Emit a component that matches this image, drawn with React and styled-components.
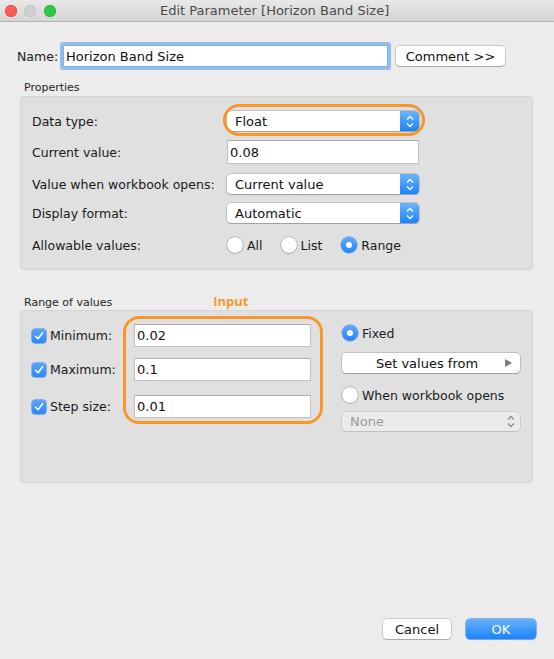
import React from 'react';
import styled, { createGlobalStyle } from 'styled-components';

const Global = createGlobalStyle`
  html, body { margin: 0; padding: 0; background: #ececec; }
  body {
    font-family: "DejaVu Sans", "Open Sans", sans-serif;
    font-size: 12.5px;
    color: #1a1a1a;
  }
  * { box-sizing: border-box; }
`;

const Window = styled.div`
  width: 554px;
  height: 659px;
  display: flex;
  flex-direction: column;
  background: #ececec;
  overflow: hidden;
`;

const TitleBar = styled.div`
  height: 22px;
  flex: none;
  display: flex;
  align-items: center;
  background: linear-gradient(#e8e8e8, #d5d5d5);
  border-bottom: 1px solid #b4b4b4;
`;

const Lights = styled.div`
  display: flex;
  gap: 7.5px;
  padding-left: 4.5px;
  width: 160px;
`;

const Light = styled.span`
  width: 12px;
  height: 12px;
  border-radius: 50%;
  background: ${p => p.$c};
  box-shadow: inset 0 0 0 0.5px ${p => p.$b};
`;

const Title = styled.div`
  font-size: 13px;
  color: #4a4a4a;
  white-space: nowrap;
`;

const NameRow = styled.div`
  display: flex;
  align-items: center;
  height: 26px;
  margin-top: 21px;
  padding-left: 17px;
`;

const NameLabel = styled.span`
  width: 46px;
`;

const TextField = styled.div`
  width: ${p => p.$w}px;
  height: ${p => p.$h}px;
  background: #fff;
  border: 1px solid #c0c0c0;
  border-top-color: #adadad;
  display: flex;
  align-items: center;
  padding-left: 2px;
  font-size: 13px;
  color: #111;
  ${p => p.$focus && `
    box-shadow: 0 0 0 3px #92bdf0;
    border-color: #86b0e6;
    border-radius: 1px;
  `}
`;

const PushButton = styled.div`
  width: ${p => p.$w}px;
  height: 20px;
  border-radius: 4px;
  display: flex;
  align-items: center;
  justify-content: center;
  font-size: 13px;
  color: ${p => (p.$primary ? '#fff' : '#111')};
  background: ${p => (p.$primary ? 'linear-gradient(#69b1fa, #1b82fb)' : '#fff')};
  box-shadow: ${p =>
    p.$primary
      ? '0 0 0 0.5px #2d7fe6, 0 1px 1px rgba(0,0,0,0.15)'
      : '0 0 0 0.5px rgba(0,0,0,0.28), 0 1px 1px rgba(0,0,0,0.18)'};
  margin-left: ${p => p.$ml || 0}px;
`;

const SectionHeader = styled.div`
  display: flex;
  align-items: center;
  height: 14px;
  padding-left: 24px;
  margin-top: ${p => p.$mt}px;
  margin-bottom: ${p => p.$mb}px;
`;

const SmallLabel = styled.span`
  font-size: 11px;
  color: #1f1f1f;
`;

const Annotation = styled.span`
  font-family: "Open Sans", "DejaVu Sans", sans-serif;
  font-weight: 700;
  font-size: 13px;
  color: #f39a2c;
  margin-left: ${p => p.$ml}px;
  margin-top: -3px;
`;

const Panel = styled.div`
  margin: 0 21px 0 20px;
  height: ${p => p.$h}px;
  background: #e0e0e0;
  border: 1px solid #d3d3d3;
  border-radius: 4px;
  padding: ${p => p.$pad};
`;

const FormRow = styled.div`
  display: flex;
  align-items: center;
  height: ${p => p.$h}px;
  margin-top: ${p => p.$mt || 0}px;
`;

const FormLabel = styled.span`
  width: 195px;
  flex: none;
`;

const SelectBox = styled.div`
  position: relative;
  width: ${p => p.$w}px;
  height: ${p => p.$h || 20}px;
  display: flex;
  align-items: center;
  background: ${p => (p.$disabled ? '#ebebeb' : '#fff')};
  border-radius: 4px;
  box-shadow: ${p =>
    p.$disabled
      ? '0 0 0 0.5px rgba(0,0,0,0.15), 0 1px 1px rgba(0,0,0,0.08)'
      : '0 0 0 0.5px rgba(0,0,0,0.28), 0 1px 1px rgba(0,0,0,0.18)'};
  padding-left: 8px;
  color: ${p => (p.$disabled ? '#9a9a9a' : '#111')};
  font-size: 13px;
  ${p => p.$ring && `
    &::after {
      content: '';
      position: absolute;
      top: -7px; bottom: -5px; left: -4px; right: -6px;
      border: 3px solid #f7962b;
      border-radius: 16px;
      pointer-events: none;
    }
  `}
`;

const SelectArrow = styled.span`
  margin-left: auto;
  width: 19px;
  height: 100%;
  display: flex;
  align-items: center;
  justify-content: center;
  border-radius: 0 4px 4px 0;
  background: ${p => (p.$disabled ? 'transparent' : 'linear-gradient(#6cb4fb, #1c83fb)')};
`;

const RadioGroup = styled.div`
  display: flex;
  align-items: center;
`;

const RadioItem = styled.span`
  display: flex;
  align-items: center;
  gap: 4px;
  margin-right: ${p => p.$mr || 0}px;
`;

const RadioCircle = styled.span`
  width: 16px;
  height: 16px;
  border-radius: 50%;
  flex: none;
  display: flex;
  align-items: center;
  justify-content: center;
  background: ${p => (p.$on ? 'linear-gradient(#5eaafa, #2586fb)' : '#fff')};
  box-shadow: ${p =>
    p.$on ? '0 0 0 0.5px #2a7fe8' : '0 0 0 0.5px rgba(0,0,0,0.35), 0 1px 1px rgba(0,0,0,0.12)'};
  &::after {
    content: '';
    display: ${p => (p.$on ? 'block' : 'none')};
    width: 6px;
    height: 6px;
    border-radius: 50%;
    background: #fff;
  }
`;

const RangeBody = styled.div`
  display: flex;
`;

const CheckCol = styled.div`
  width: 91px;
  padding-top: 8px;
  display: flex;
  flex-direction: column;
`;

const CheckRow = styled.div`
  display: flex;
  align-items: center;
  gap: 4px;
  height: 23px;
  margin-top: ${p => p.$mt || 0}px;
`;

const CheckBox = styled.span`
  width: 14px;
  height: 14px;
  border-radius: 3px;
  flex: none;
  display: flex;
  align-items: center;
  justify-content: center;
  background: linear-gradient(#58a6fb, #2b87fb);
  box-shadow: 0 0 0 0.5px #2a7fe8;
`;

const InputRing = styled.div`
  width: 200px;
  height: 108px;
  border: 3px solid #f7962b;
  border-radius: 16px;
  padding: 5px 0 0 8px;
  display: flex;
  flex-direction: column;
`;

const RingField = styled(TextField)`
  margin-top: ${p => p.$mt || 0}px;
`;

const RightCol = styled.div`
  margin-left: 19px;
  width: 178px;
  padding-top: 9px;
  display: flex;
  flex-direction: column;
`;

const StackItem = styled.div`
  margin-top: ${p => p.$mt || 0}px;
  display: flex;
  align-items: center;
  height: ${p => p.$h}px;
`;

const SetButton = styled(PushButton)`
  width: 178px;
  position: relative;
  padding-right: 8px;
  justify-content: center;
`;

const Triangle = styled.span`
  position: absolute;
  right: 8px;
  top: 6px;
  width: 0;
  height: 0;
  border-top: 4px solid transparent;
  border-bottom: 4px solid transparent;
  border-left: 7px solid #7d7d7d;
`;

const Footer = styled.div`
  margin-top: auto;
  display: flex;
  justify-content: flex-end;
  padding: 0 18px 20px 0;
`;

const Chevrons = ({ color }) => (
  <svg width="8" height="13" viewBox="0 0 8 13">
    <path d="M1 4.5 L4 1.5 L7 4.5" fill="none" stroke={color} strokeWidth="1.3" />
    <path d="M1 8.5 L4 11.5 L7 8.5" fill="none" stroke={color} strokeWidth="1.3" />
  </svg>
);

const Check = () => (
  <svg width="10" height="10" viewBox="0 0 10 10">
    <path d="M1.5 5.3 L4 7.8 L8.6 1.8" fill="none" stroke="#fff" strokeWidth="1.6" strokeLinecap="round" strokeLinejoin="round" />
  </svg>
);

const Select = ({ value, w = 192, ring, disabled, h }) => (
  <SelectBox $w={w} $ring={ring} $disabled={disabled} $h={h}>
    {value}
    <SelectArrow $disabled={disabled}>
      <Chevrons color={disabled ? '#8a8a8a' : '#fff'} />
    </SelectArrow>
  </SelectBox>
);

const Radio = ({ on, label, mr }) => (
  <RadioItem $mr={mr}>
    <RadioCircle $on={on} />
    {label}
  </RadioItem>
);

export default function App() {
  return (
    <>
      <Global />
      <Window>
        <TitleBar>
          <Lights>
            <Light $c="#fc5b57" $b="#e0443e" />
            <Light $c="#d0d0d0" $b="#bcbcbc" />
            <Light $c="#33c748" $b="#27aa35" />
          </Lights>
          <Title>Edit Parameter [Horizon Band Size]</Title>
        </TitleBar>

        <NameRow>
          <NameLabel>Name:</NameLabel>
          <TextField $w={325} $h={22} $focus>Horizon Band Size</TextField>
          <PushButton $w={109} $ml={8}>Comment &gt;&gt;</PushButton>
        </NameRow>

        <SectionHeader $mt={11} $mb={2}>
          <SmallLabel>Properties</SmallLabel>
        </SectionHeader>
        <Panel $h={174} $pad="14px 0 0 11px">
          <FormRow $h={20}>
            <FormLabel>Data type:</FormLabel>
            <Select value="Float" ring />
          </FormRow>
          <FormRow $h={24} $mt={9}>
            <FormLabel>Current value:</FormLabel>
            <TextField $w={192} $h={24}>0.08</TextField>
          </FormRow>
          <FormRow $h={20} $mt={10}>
            <FormLabel>Value when workbook opens:</FormLabel>
            <Select value="Current value" />
          </FormRow>
          <FormRow $h={20} $mt={9}>
            <FormLabel>Display format:</FormLabel>
            <Select value="Automatic" />
          </FormRow>
          <FormRow $h={16} $mt={14}>
            <FormLabel>Allowable values:</FormLabel>
            <RadioGroup>
              <Radio label="All" mr={18} />
              <Radio label="List" mr={19} />
              <Radio label="Range" on />
            </RadioGroup>
          </FormRow>
        </Panel>

        <SectionHeader $mt={25} $mb={1}>
          <SmallLabel>Range of values</SmallLabel>
          <Annotation $ml={101}>Input</Annotation>
        </SectionHeader>
        <Panel $h={173} $pad="5px 0 0 11px">
          <RangeBody>
            <CheckCol>
              <CheckRow>
                <CheckBox><Check /></CheckBox>
                Minimum:
              </CheckRow>
              <CheckRow $mt={11}>
                <CheckBox><Check /></CheckBox>
                Maximum:
              </CheckRow>
              <CheckRow $mt={14}>
                <CheckBox><Check /></CheckBox>
                Step size:
              </CheckRow>
            </CheckCol>
            <InputRing>
              <RingField $w={177} $h={23}>0.02</RingField>
              <RingField $w={177} $h={23} $mt={11}>0.1</RingField>
              <RingField $w={177} $h={23} $mt={14}>0.01</RingField>
            </InputRing>
            <RightCol>
              <StackItem $h={16}>
                <Radio label="Fixed" on />
              </StackItem>
              <StackItem $h={20} $mt={12}>
                <SetButton $w={178}>
                  Set values from
                  <Triangle />
                </SetButton>
              </StackItem>
              <StackItem $h={16} $mt={14}>
                <Radio label="When workbook opens" />
              </StackItem>
              <StackItem $h={19} $mt={9}>
                <Select value="None" w={178} h={19} disabled />
              </StackItem>
            </RightCol>
          </RangeBody>
        </Panel>

        <Footer>
          <PushButton $w={68}>Cancel</PushButton>
          <PushButton $w={70} $ml={15} $primary>OK</PushButton>
        </Footer>
      </Window>
    </>
  );
}
